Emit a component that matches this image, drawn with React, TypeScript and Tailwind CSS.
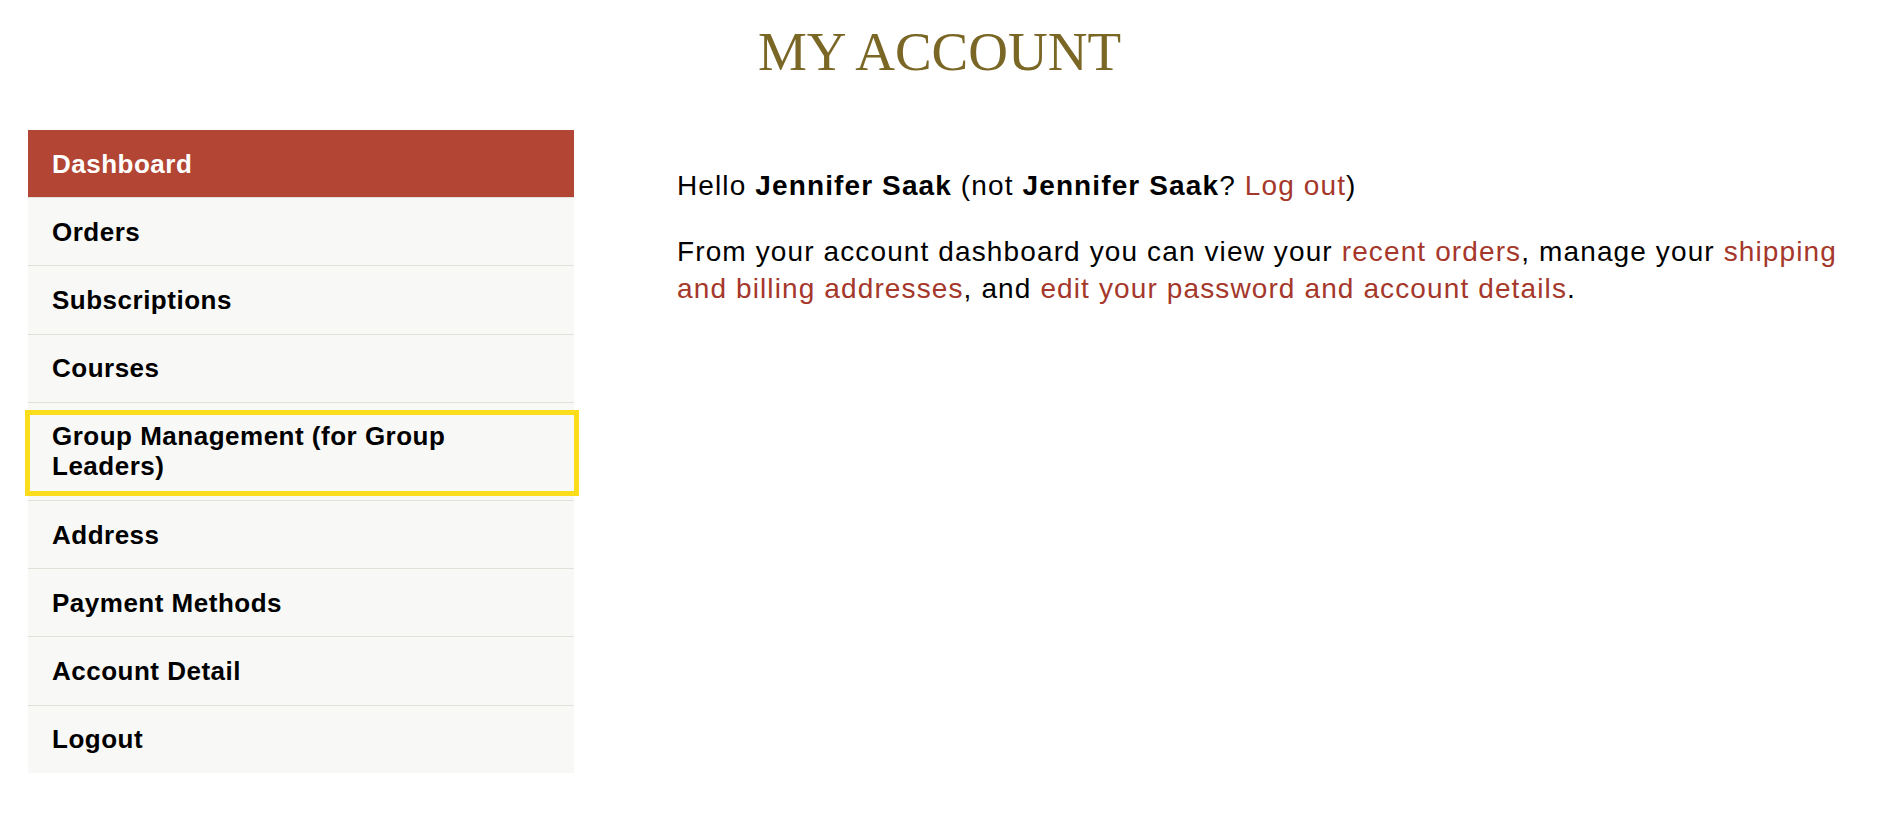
import React from "react";

const NAV = [
  "Dashboard",
  "Orders",
  "Subscriptions",
  "Courses",
  "Group Management (for Group Leaders)",
  "Address",
  "Payment Methods",
  "Account Detail",
  "Logout",
];

const link = "text-[#a5372b] no-underline";

export default function App() {
  return (
    <div className="min-h-screen bg-white text-black [font-family:'Liberation_Sans',Arial,sans-serif]">
      {/* Page title */}
      <div className="pt-[19px] pr-[13px] text-center">
        <h1 className="text-[55px] leading-[66px] font-normal text-[#7a6725] [font-family:'Liberation_Serif','Times_New_Roman',serif]">
          MY ACCOUNT
        </h1>
      </div>

      <div className="flex px-[28px] mt-[45px]">
        {/* Account navigation */}
        <nav className="w-[546px] shrink-0">
          <ul>
            {NAV.map((item, i) => {
              const active = i === 0;
              const highlight = item.startsWith("Group");
              return (
                <li
                  key={item}
                  className={`relative border-b border-[#e2e0d9] ${active ? "bg-[#b24533] text-white" : "bg-[#f8f8f6] text-black"} ${i === NAV.length - 1 ? "border-b-0" : ""}`}
                >
                  <a className="block py-[18.6px] pl-[24px] pr-[90px] text-[26px] leading-[30px] font-bold tracking-[0.5px]">
                    {item}
                  </a>
                  {highlight && (
                    <span className="pointer-events-none absolute top-[7px] bottom-[4px] left-[-3px] right-[-5px] border-[5px] border-[#fcdd1c]" />
                  )}
                </li>
              );
            })}
          </ul>
        </nav>

        {/* Dashboard content */}
        <main className="flex-1 ml-[103px] pt-[37px] text-[28px] leading-[37px] tracking-[0.04em]">
          <p className="mb-[29px]">
            Hello <strong>Jennifer Saak</strong> (not <strong>Jennifer Saak</strong>?{" "}
            <a className={link}>Log out</a>)
          </p>
          <p>
            From your account dashboard you can view your <a className={link}>recent orders</a>, manage your{" "}
            <a className={link}>shipping and billing addresses</a>, and{" "}
            <a className={link}>edit your password and account details</a>.
          </p>
        </main>
      </div>
    </div>
  );
}
